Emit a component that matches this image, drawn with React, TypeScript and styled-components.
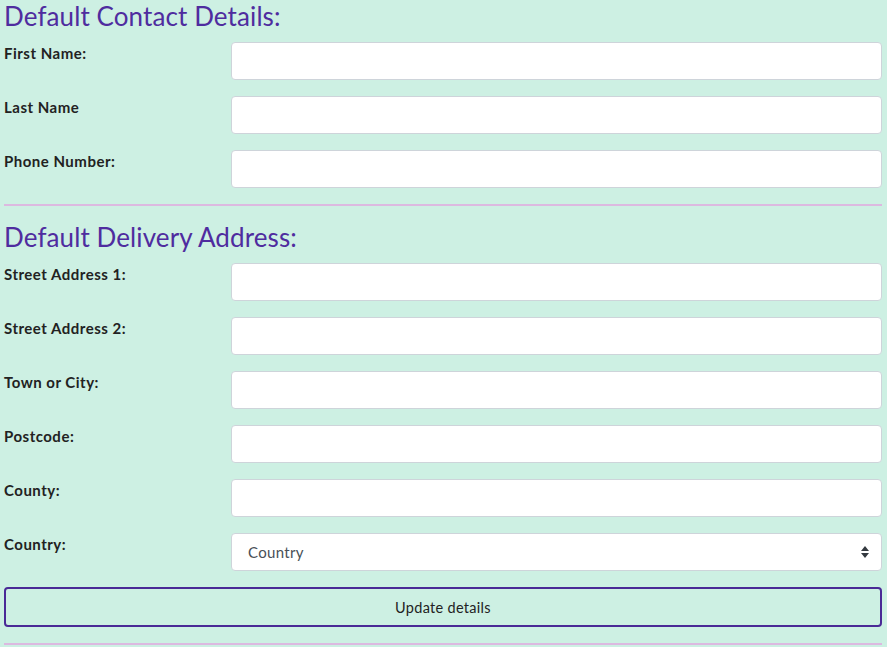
import React from "react";
import styled, { createGlobalStyle } from "styled-components";

const Global = createGlobalStyle`
  html, body { margin: 0; padding: 0; background: #cdf0e3; }
  body { font-family: "Lato", "Noto Sans", sans-serif; color: #212529; }
  * { box-sizing: border-box; }
`;

const Page = styled.div`
  padding: 0 5px 0 4px;
  display: flex;
  flex-direction: column;
`;

const Heading = styled.h2<{ $top?: number }>`
  margin: ${(p) => p.$top ?? 0}px 0 10px 0;
  font-size: 26px;
  font-weight: 400;
  line-height: 32px;
  color: #4f2c9f;
  letter-spacing: 0.1px;
`;

const Row = styled.div`
  display: grid;
  grid-template-columns: 227px 1fr;
  margin-bottom: 16px;
`;

const Label = styled.label`
  font-size: 15px;
  font-weight: 700;
  color: #222;
  padding-top: 1px;
  line-height: 20px;
  letter-spacing: 0.5px;
`;

const Input = styled.input`
  height: 38px;
  width: 100%;
  border: 1px solid #ced4da;
  border-radius: 4px;
  background: #fff;
  padding: 0 16px;
  font: inherit;
`;

const SelectWrap = styled.div`
  position: relative;
`;

const Select = styled.select`
  appearance: none;
  -webkit-appearance: none;
  height: 38px;
  width: 100%;
  border: 1px solid #ced4da;
  border-radius: 4px;
  background: #fff;
  padding: 0 16px;
  font-family: "Lato", sans-serif;
  font-size: 15px;
  letter-spacing: 0.3px;
  color: #495057;
`;

const Arrows = styled.svg`
  position: absolute;
  right: 13px;
  top: 13px;
  width: 8px;
  height: 12px;
  pointer-events: none;
`;

const Rule = styled.div`
  height: 2px;
  background: #dcb9e0;
`;

const Button = styled.button`
  height: 40px;
  width: 100%;
  border: 2px solid #4a2a96;
  border-radius: 4px;
  background: transparent;
  font-family: "Lato", sans-serif;
  font-size: 14.5px;
  letter-spacing: 0.3px;
  color: #222;
  margin-bottom: 16px;
`;

const contact = ["First Name:", "Last Name", "Phone Number:"];
const address = ["Street Address 1:", "Street Address 2:", "Town or City:", "Postcode:", "County:"];

export default function App() {
  return (
    <>
      <Global />
      <Page>
        <Heading>Default Contact Details:</Heading>
        {contact.map((l) => (
          <Row key={l}>
            <Label>{l}</Label>
            <Input />
          </Row>
        ))}
        <Rule />
        <Heading $top={15}>Default Delivery Address:</Heading>
        {address.map((l) => (
          <Row key={l}>
            <Label>{l}</Label>
            <Input />
          </Row>
        ))}
        <Row>
          <Label>Country:</Label>
          <SelectWrap>
            <Select defaultValue="">
              <option value="">Country</option>
            </Select>
            <Arrows viewBox="0 0 8 12">
              <path d="M4 0 L8 5 L0 5 Z M4 12 L8 7 L0 7 Z" fill="#343a40" />
            </Arrows>
          </SelectWrap>
        </Row>
        <Button>Update details</Button>
        <Rule />
      </Page>
    </>
  );
}
